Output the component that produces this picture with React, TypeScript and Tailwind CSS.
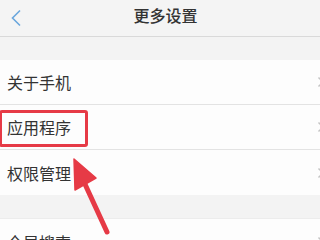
import React from 'react';

const font = { fontFamily: '"Noto Sans CJK SC", "Noto Sans", sans-serif' };

function Chevron() {
    return (
        <svg width="8" height="12" viewBox="0 0 8 12" className="mr-[-5px] shrink-0">
            <path d="M1.5 1.5 L6 6 L1.5 10.5" fill="none" stroke="#c4c4c4" strokeWidth="1.5" />
        </svg>
    );
}

function Row({ label, last }: { label: string; last?: boolean }) {
    return (
        <div className={`h-[45px] flex items-center justify-between pl-[7px] bg-[#fdfdfd] ${last ? '' : 'border-b border-[#e3e3e3]'}`}>
            <span className="text-[16px] text-[#333333] leading-none">{label}</span>
            <Chevron />
        </div>
    );
}

export default function App() {
    return (
        <div className="w-[320px] h-[240px] overflow-hidden bg-[#f3f3f3] relative" style={font}>
            {/* Header */}
            <div className="h-[37px] flex items-center bg-[#f4f4f4] border-b border-[#d9d9d9] relative">
                <svg width="12" height="18" viewBox="0 0 12 18" className="ml-[10px]">
                    <path d="M10 1.5 L2.5 9 L10 16.5" fill="none" stroke="#6aa6dc" strokeWidth="1.6" />
                </svg>
                <div className="flex-1 text-center text-[16px] font-medium text-[#333333] mr-[11px] mt-[-7px]">更多设置</div>
            </div>

            <div className="h-[23px]" />

            <Row label="关于手机" />
            <Row label="应用程序" />
            <Row label="权限管理" last />

            <div className="h-[24px] border-b border-[#ececec]" />

            <Row label="全局搜索" last />

            {/* annotation: red box */}
            <div className="absolute left-[-1px] top-[110px] w-[89px] h-[37px] border-[3px] border-[#e63a46] rounded-[3px]" />

            {/* annotation: arrow */}
            <svg className="absolute left-0 top-0" width="320" height="240" viewBox="0 0 320 240">
                <line x1="84" y1="182" x2="107" y2="232" stroke="#e63a46" strokeWidth="5" strokeLinecap="round" />
                <polygon points="74,159 75,190 96,178" fill="#e63a46" stroke="#e63a46" strokeWidth="1.5" strokeLinejoin="round" />
            </svg>
        </div>
    );
}
